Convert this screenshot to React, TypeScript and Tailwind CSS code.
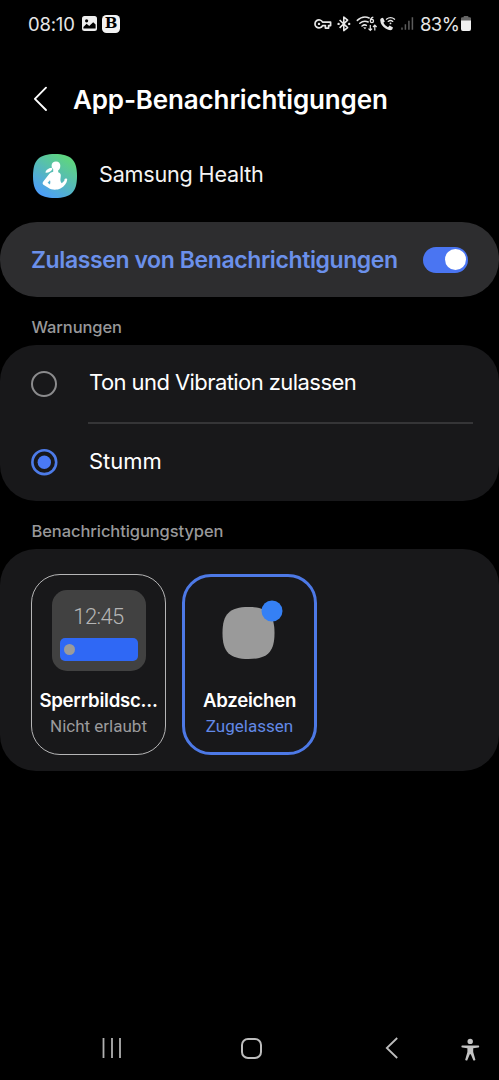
import type { ReactNode } from "react";

function StatusBar() {
  return (
    <header className="flex h-[47px] items-center pl-[28px] text-[#e6e6e6]">
      <span className="w-[54px] text-[18.5px] leading-6 tracking-[-0.2px]">08:10</span>
      <svg className="h-[15px] w-[15px]" viewBox="0 0 15 15">
        <rect x="0" y="0" width="15" height="15" rx="2.5" fill="#eeeeee" />
        <circle cx="4.6" cy="4.8" r="1.6" fill="#000" />
        <path d="M1.4 12.6V11L4.6 7.8L7.2 10L11.2 6.2L13.6 8.6V12.6Z" fill="#000" />
      </svg>
      <span className="ml-[5px] flex h-[18px] w-[18px] items-center justify-center rounded-[4.5px] bg-[#f2f2f2] font-['DejaVu_Serif',serif] text-[15px] leading-none font-bold text-black">
        B
      </span>
      <svg className="ml-[193px] h-[24px] w-[102px]" viewBox="313 12 102 24" fill="none" stroke="#e6e6e6" strokeWidth="1.7">
        <path d="M322.6 22.2a4 4 0 1 0 0 3.4H325.4V28.1H328.6V25.6H330.6V22.2Z" strokeLinejoin="round" />
        <circle cx="319" cy="23.9" r="1.2" fill="#e6e6e6" stroke="none" />
        <path d="M339.6 20L347.6 27.6L343.8 30.6V17L347.6 20.2L339.6 27.8" strokeWidth="1.6" strokeLinejoin="round" />
        <circle cx="338.6" cy="23.9" r="1.2" fill="#e6e6e6" stroke="none" />
        <circle cx="349.2" cy="23.9" r="1.2" fill="#e6e6e6" stroke="none" />
        <path d="M357.3 20.4Q362.8 15.3 369.2 18M359.8 23.3Q363.8 19.8 368.2 22M362 26Q364.4 24.1 366.4 25.4" strokeLinecap="round" strokeWidth="1.5" />
        <path d="M363.1 27.2L365 29.2L366.4 27.6Z" fill="#e6e6e6" stroke="none" />
        <path d="M373.3 17.2Q370.4 18 370.4 20.8M370.3 21a1.6 1.6 0 1 0 3.2 0a1.6 1.6 0 1 0 -3.2 0" strokeWidth="1.3" />
        <path d="M370.3 25V30.2M368.5 28.6L370.3 30.5L372.1 28.6M374.8 30.5V25.2M373 27L374.8 25.1L376.6 27" strokeWidth="1.2" />
        <path d="M381.2 18.2L383 17.8L384.8 21.4L383.4 22.8Q384.8 26 388 27.2L389.6 25.6L393 27.6L392.2 29.6Q390 31 386 28.8Q380.6 25.6 380.2 20Q380.2 18.8 381.2 18.2Z" fill="#e6e6e6" stroke="none" />
        <path d="M386.4 19.2Q390.6 16 394.6 19.2M388.2 21.4Q390.6 19.6 392.8 21.4" strokeWidth="1.3" strokeLinecap="round" />
        <circle cx="390.5" cy="23.4" r="0.9" fill="#e6e6e6" stroke="none" />
        <path d="M402 27.5V29.7M405.4 24.2V29.7M408.9 20.7V29.7M412.4 17.2V29.7" stroke="#5c5c5c" strokeWidth="1.5" />
      </svg>
      <span className="ml-[5px] w-[40px] text-[18.5px] leading-6 tracking-[-0.6px] whitespace-nowrap">83%</span>
      <svg className="ml-[1px] h-[15px] w-[10px]" viewBox="0 0 10 15">
        <path d="M2.5 1.2Q2.5 0 3.5 0H6.5Q7.5 0 7.5 1.2H8.8Q10 1.2 10 2.5V5H0V2.5Q0 1.2 1.2 1.2Z" fill="#666666" />
        <path d="M0 4.5H10V13Q10 15 8.2 15H1.8Q0 15 0 13Z" fill="#f0f0f0" />
      </svg>
    </header>
  );
}

function HealthIcon() {
  return (
    <svg className="h-[44px] w-[44px]" viewBox="0 0 44 44">
      <defs>
        <linearGradient id="health" x1="0.2" y1="0.95" x2="0.75" y2="0.1">
          <stop offset="0" stopColor="#4c9dfb" />
          <stop offset="0.5" stopColor="#55b8bd" />
          <stop offset="1" stopColor="#5ed482" />
        </linearGradient>
      </defs>
      <path d="M22 0C38 0 44 6 44 22S38 44 22 44S0 38 0 22S6 0 22 0Z" fill="url(#health)" />
      <g fill="#fff">
        <path d="M18.6 11.6C18.6 8.8 20.6 7.4 23 7.4C25.8 7.4 27.5 9.3 27.3 11.8C27.3 14.4 26.4 15.9 25.2 16.3V18.2C27.6 19 28.2 20.6 27.6 23.4C27.1 26 27.5 28 28.8 29.3L31.3 26.7L31.6 24.9C32 24.1 34.4 24.2 34.2 25.5C33.8 29.3 31.5 32.2 27.4 34.6C24.2 36.3 18.2 36.2 15.7 34.1L10.4 30.7C9.4 29.9 9.3 28.6 10.3 27.4L15.4 20.9C16.7 19.1 18.2 18.2 20.2 17.8V15.1C19.2 14.4 18.6 13.3 18.6 11.6Z" />
        <path d="M12.3 18.6C12.9 16.2 15 14.2 18.8 13.8L19.4 15.2C17.8 17.8 15.4 18.9 12.3 18.6Z" />
      </g>
      <path d="M17 26.2L14.6 28.8L17 30.4Q18 28.6 17 26.2Z" fill="#54b0d1" />
    </svg>
  );
}

function Radio({ checked = false }: { checked?: boolean }) {
  return checked ? (
    <svg className="h-[27px] w-[27px]" viewBox="0 0 27 27">
      <circle cx="13.3" cy="13.2" r="11.9" fill="none" stroke="#4d7be8" strokeWidth="2.6" />
      <circle cx="13.3" cy="13.2" r="6.7" fill="#4a7af5" />
    </svg>
  ) : (
    <span className="h-[26px] w-[26px] rounded-full border-2 border-[#8b8b8d]" />
  );
}

function TypeCard({ title, state, active = false, children }: { title: string; state: string; active?: boolean; children: ReactNode }) {
  return (
    <div
      className={
        active
          ? "flex h-[181px] w-[135px] flex-col items-center rounded-[29px] border-[3px] border-[#4d79e6] pt-[13px]"
          : "flex h-[181px] w-[135px] flex-col items-center rounded-[29px] border border-[#b5b5b6] pt-[15px]"
      }
    >
      <div className="h-[98px]">{children}</div>
      <p className="h-6 text-[18.6px] leading-6 font-semibold tracking-[-0.25px] whitespace-nowrap text-white">{title}</p>
      <p
        className={
          active
            ? "mt-[2px] font-['Roboto',sans-serif] text-[17px] leading-6 text-[#6289e6]"
            : "mt-[2px] font-['Roboto',sans-serif] text-[17px] leading-6 text-[#9b9b9d]"
        }
      >
        {state}
      </p>
    </div>
  );
}

function NavBar() {
  return (
    <nav className="mt-auto flex h-[64px] items-center pl-[101px]">
      <svg className="h-[22px] w-[21px]" viewBox="0 0 21 22" stroke="#b0b0b0" strokeWidth="1.8">
        <path d="M2.5 1V21M11 1V21M19 1V21" />
      </svg>
      <span className="ml-[119px] h-[21px] w-[21px] rounded-[7px] border-2 border-[#bdbdbd]" />
      <svg className="ml-[123px] h-[22px] w-[14px]" viewBox="0 0 14 22" fill="none" stroke="#bdbdbd" strokeWidth="1.8">
        <path d="M12.2 1L1.8 11L12.2 21" />
      </svg>
      <svg className="mt-[3px] ml-[62px] h-[24px] w-[19px]" viewBox="0 0 19 24" fill="#c4c4c4">
        <circle cx="9.2" cy="3.4" r="2.7" />
        <path d="M1.2 7.4H17.4Q18.2 7.5 18.2 8.5T17.4 9.6L12.2 10.2V14L14.4 21.8Q14.2 22.8 12.4 22.4L9.8 16.2H8.8L6.2 22.4Q4.4 22.8 4.2 21.8L6.4 14V10.2L1.2 9.6Q.4 9.5.4 8.5T1.2 7.4Z" />
      </svg>
    </nav>
  );
}

export default function App() {
  return (
    <main className="flex h-[1080px] w-full flex-col overflow-hidden bg-black font-['Inter',sans-serif] text-white">
      <StatusBar />
      <div className="mt-[32px] flex h-10 items-center pl-[33px]">
        <svg className="h-[26px] w-[16px]" viewBox="0 0 16 26" fill="none" stroke="#fff" strokeWidth="1.9" strokeLinecap="round" strokeLinejoin="round">
          <path d="M13 1.7L1.9 12.8L13 24" />
        </svg>
        <h1 className="mt-[2px] ml-[24px] text-[26px] leading-10 font-semibold tracking-[-0.15px] whitespace-nowrap">App-Benachrichtigungen</h1>
      </div>

      <div className="mt-[35px] flex h-[44px] items-center pl-[33px]">
        <HealthIcon />
        <span className="mb-[4px] ml-[22px] text-[21.6px] leading-8 tracking-[-0.2px] text-[#f4f4f4]">Samsung Health</span>
      </div>

      <section className="mt-[24px] flex h-[75px] items-center justify-between rounded-[37px] bg-[#2d2d2f] pr-[31px] pl-[31px]">
        <span className="text-[23px] leading-8 font-semibold tracking-[-0.4px] whitespace-nowrap text-[#6b90ea]">Zulassen von Benachrichtigungen</span>
        <span className="flex h-[26px] w-[45px] items-center justify-end rounded-full bg-[#4a75f2] pr-[2px]">
          <span className="h-[21px] w-[21px] rounded-full bg-white" />
        </span>
      </section>

      <h2 className="mt-[18px] h-6 pl-[31.5px] text-[16.5px] leading-6 font-medium tracking-[-0.1px] text-[#98989a]">Warnungen</h2>
      <section className="mt-[6px] h-[156px] rounded-[36px] bg-[#18181a] pr-[26px]">
        <div className="flex h-[77px] items-center">
          <span className="flex w-[89px] pl-[31px]"><Radio /></span>
          <span className="mb-[3px] text-[22px] leading-8 tracking-[-0.57px] whitespace-nowrap">Ton und Vibration zulassen</span>
        </div>
        <div className="ml-[88px] h-[2px] bg-[#353537]" />
        <div className="flex h-[77px] items-center">
          <span className="flex w-[89px] pl-[31px]"><Radio checked /></span>
          <span className="mb-[3px] text-[22px] leading-8">Stumm</span>
        </div>
      </section>

      <h2 className="mt-[18px] h-6 pl-[31.5px] text-[16.5px] leading-6 font-medium tracking-[-0.08px] text-[#98989a]">Benachrichtigungstypen</h2>
      <section className="mt-[6px] flex h-[222px] gap-[16px] rounded-[36px] bg-[#18181a] pt-[25px] pl-[31px]">
        <TypeCard title="Sperrbildsc..." state="Nicht erlaubt">
          <div className="flex h-[81px] w-[94px] flex-col items-center rounded-[15px] bg-[#414141] pt-[14px]">
            <span className="font-['Roboto',sans-serif] text-[22px] leading-[26px] font-light tracking-[-0.6px] text-[#b5b5b5]">12:45</span>
            <span className="mt-[8px] flex h-[23px] w-[78px] items-center rounded-[5px] bg-[#2f68f5] pl-[4px]">
              <span className="h-[11px] w-[11px] rounded-full bg-[#9b9b9b]" />
            </span>
          </div>
        </TypeCard>
        <TypeCard title="Abzeichen" state="Zugelassen" active>
          <svg className="h-[81px] w-[94px]" viewBox="0 0 94 81">
            <path d="M45.5 17C64.5 17 71.5 24 71.5 43S64.5 69 45.5 69S19.5 62 19.5 43S26.5 17 45.5 17Z" fill="#9a9a9a" />
            <circle cx="69" cy="21" r="10.5" fill="#3580f5" />
          </svg>
        </TypeCard>
      </section>
      <NavBar />
    </main>
  );
}
